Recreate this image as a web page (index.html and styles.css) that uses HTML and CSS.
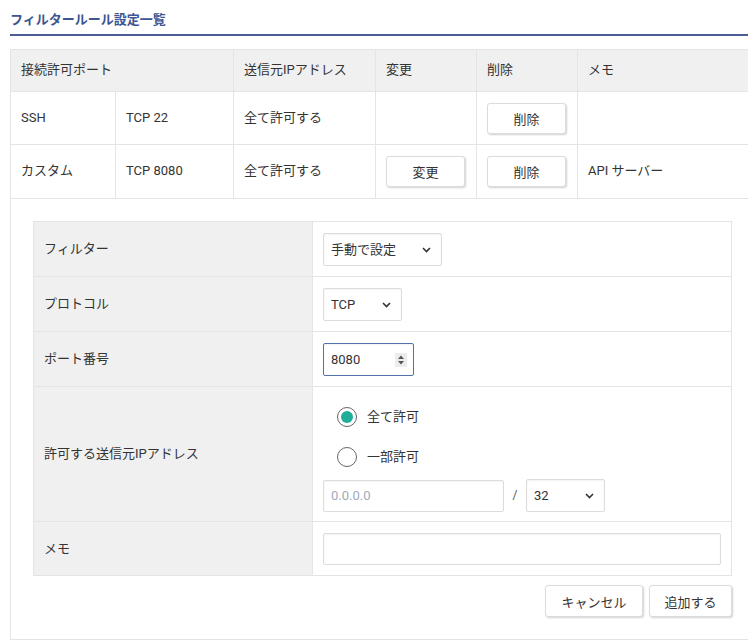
FILE: index.html
```html
<!DOCTYPE html>
<html lang="ja">
<head>
    <meta charset="UTF-8">
    <meta name="viewport" content="width=device-width, initial-scale=1.0">
    <title>フィルタールール設定一覧</title>
    <link rel="stylesheet" href="styles.css">
</head>
<body>

<div class="page">
    <h2 class="section-title">フィルタールール設定一覧</h2>

    <table class="rules">
        <colgroup>
            <col class="c-name">
            <col class="c-port">
            <col class="c-src">
            <col class="c-edit">
            <col class="c-del">
            <col class="c-memo">
        </colgroup>
        <thead>
            <tr>
                <th colspan="2">接続許可ポート</th>
                <th>送信元IPアドレス</th>
                <th>変更</th>
                <th>削除</th>
                <th>メモ</th>
            </tr>
        </thead>
        <tbody>
            <tr class="row-ssh">
                <td>SSH</td>
                <td>TCP 22</td>
                <td>全て許可する</td>
                <td></td>
                <td><button type="button" class="btn btn-cell">削除</button></td>
                <td></td>
            </tr>
            <tr class="row-custom">
                <td>カスタム</td>
                <td>TCP 8080</td>
                <td>全て許可する</td>
                <td><button type="button" class="btn btn-cell">変更</button></td>
                <td><button type="button" class="btn btn-cell">削除</button></td>
                <td>API サーバー</td>
            </tr>
            <tr class="edit-row">
                <td colspan="6">
                    <table class="form-table">
                        <tr>
                            <th>フィルター</th>
                            <td>
                                <div class="select-wrap w-filter">
                                    <select>
                                        <option>手動で設定</option>
                                    </select>
                                    <svg class="chevron" width="9" height="6" viewBox="0 0 9 6"><path d="M1 1l3.5 3.5L8 1" fill="none" stroke="#333" stroke-width="1.6"/></svg>
                                </div>
                            </td>
                        </tr>
                        <tr>
                            <th>プロトコル</th>
                            <td>
                                <div class="select-wrap w-short">
                                    <select>
                                        <option>TCP</option>
                                        <option>UDP</option>
                                    </select>
                                    <svg class="chevron" width="9" height="6" viewBox="0 0 9 6"><path d="M1 1l3.5 3.5L8 1" fill="none" stroke="#333" stroke-width="1.6"/></svg>
                                </div>
                            </td>
                        </tr>
                        <tr>
                            <th>ポート番号</th>
                            <td>
                                <div class="number-wrap">
                                    <input type="text" class="field field-focus w-port" value="8080">
                                    <svg class="spinner" width="12" height="14" viewBox="0 0 12 14">
                                        <rect width="12" height="14" fill="#ececec"/>
                                        <path d="M6 2.5l3 3.5H3z M6 11.5l3-3.5H3z" fill="#555"/>
                                    </svg>
                                </div>
                            </td>
                        </tr>
                        <tr>
                            <th>許可する送信元IPアドレス</th>
                            <td class="src-cell">
                                <label class="radio-row">
                                    <input type="radio" name="src" checked>
                                    <span>全て許可</span>
                                </label>
                                <label class="radio-row">
                                    <input type="radio" name="src">
                                    <span>一部許可</span>
                                </label>
                                <div class="ip-row">
                                    <input type="text" class="field w-ip" placeholder="0.0.0.0">
                                    <span class="slash">/</span>
                                    <div class="select-wrap w-short">
                                        <select>
                                            <option>32</option>
                                        </select>
                                        <svg class="chevron" width="9" height="6" viewBox="0 0 9 6"><path d="M1 1l3.5 3.5L8 1" fill="none" stroke="#333" stroke-width="1.6"/></svg>
                                    </div>
                                </div>
                            </td>
                        </tr>
                        <tr>
                            <th>メモ</th>
                            <td><input type="text" class="field w-memo"></td>
                        </tr>
                    </table>

                    <div class="form-actions">
                        <button type="button" class="btn btn-cancel">キャンセル</button>
                        <button type="button" class="btn btn-add">追加する</button>
                    </div>
                </td>
            </tr>
        </tbody>
    </table>
</div>

</body>
</html>
```

FILE: styles.css
```css
html, body {
    overflow: hidden;
}

body {
    margin: 0;
    font-family: Roboto, "Noto Sans CJK JP", sans-serif;
    font-size: 13px;
    line-height: 1.4;
    color: #333;
    background-color: #fff;
}

.page {
    padding-left: 10px;
}

.section-title {
    margin: 0;
    padding: 10px 0 4px;
    font-size: 13px;
    line-height: 20px;
    font-weight: bold;
    color: #3d5590;
    border-bottom: 2px solid #4a5e95;
}

/* rule list */

.rules {
    margin-top: 13px;
    width: 739px;
    table-layout: fixed;
    border-collapse: collapse;
}

.c-name { width: 105px; }
.c-port { width: 118px; }
.c-src { width: 142px; }
.c-edit { width: 101px; }
.c-del { width: 101px; }
.c-memo { width: 172px; }

.rules > thead > tr > th,
.rules > tbody > tr > td {
    border: 1px solid #e4e4e4;
    padding: 0 10px;
    text-align: left;
    vertical-align: middle;
    font-weight: normal;
}

.rules > thead > tr > th {
    height: 41px;
    background-color: #f0f0f0;
}

.row-ssh > td {
    height: 52px;
}

.row-custom > td {
    height: 53px;
}

.rules > tbody > .edit-row > td {
    padding: 22px 17px 22px 22px;
}

/* buttons */

.btn {
    font-family: inherit;
    font-size: 13px;
    color: #333;
    background-color: #fff;
    border: 1px solid #dcdcdc;
    border-radius: 3px;
    box-shadow: 1px 1px 2px rgba(0, 0, 0, 0.18);
    cursor: pointer;
    padding: 0;
}

.btn-cell {
    width: 79px;
    height: 31px;
}

.btn-cancel {
    width: 98px;
    height: 32px;
}

.btn-add {
    width: 83px;
    height: 32px;
}

.form-actions {
    display: flex;
    justify-content: flex-end;
    gap: 6px;
    margin-top: 9px;
}

/* edit form */

.form-table {
    width: 100%;
    border-collapse: collapse;
}

.form-table th,
.form-table td {
    border: 1px solid #e4e4e4;
    padding: 11px 10px 10px;
    vertical-align: middle;
}

.form-table th {
    width: 258px;
    text-align: left;
    font-weight: normal;
    background-color: #f0f0f0;
}

.field,
.select-wrap select {
    box-sizing: border-box;
    height: 33px;
    margin: 0;
    padding: 0 7px;
    font-family: inherit;
    font-size: 13px;
    color: #333;
    background-color: #fff;
    border: 1px solid #dcdcdc;
    border-radius: 2px;
    box-shadow: inset 0 1px 2px rgba(0, 0, 0, 0.05);
    outline: none;
}

.field {
    display: block;
}

.field::placeholder {
    color: #a3abbb;
}

.field-focus {
    border-color: #5470ad;
}

.select-wrap {
    position: relative;
    display: flex;
}

.select-wrap select {
    appearance: none;
    -webkit-appearance: none;
    width: 100%;
    padding-right: 26px;
}

.select-wrap .chevron {
    position: absolute;
    right: 11px;
    top: 14px;
    pointer-events: none;
}

.w-filter { width: 119px; }
.w-short { width: 79px; }
.w-port { width: 91px; }
.w-ip { width: 181px; height: 32px; }
.w-memo { width: 398px; height: 32px; }

.number-wrap {
    position: relative;
    display: flex;
    width: fit-content;
}

.number-wrap .spinner {
    position: absolute;
    right: 7px;
    top: 10px;
}

.form-table .src-cell {
    padding-top: 10px;
    padding-bottom: 9px;
}

.radio-row {
    display: flex;
    align-items: center;
    gap: 10px;
    height: 40px;
    padding-left: 14px;
}

.radio-row input {
    appearance: none;
    -webkit-appearance: none;
    margin: 0;
    width: 20px;
    height: 20px;
    border: 1px solid #666;
    border-radius: 50%;
    background-color: #fff;
    display: flex;
    align-items: center;
    justify-content: center;
}

.radio-row input:checked::after {
    content: "";
    width: 12px;
    height: 12px;
    border-radius: 50%;
    background-color: #1fae98;
}

.ip-row {
    display: flex;
    align-items: center;
    margin-top: 2px;
}

.slash {
    width: 22px;
    text-align: center;
    color: #555;
    font-size: 12px;
}
```
